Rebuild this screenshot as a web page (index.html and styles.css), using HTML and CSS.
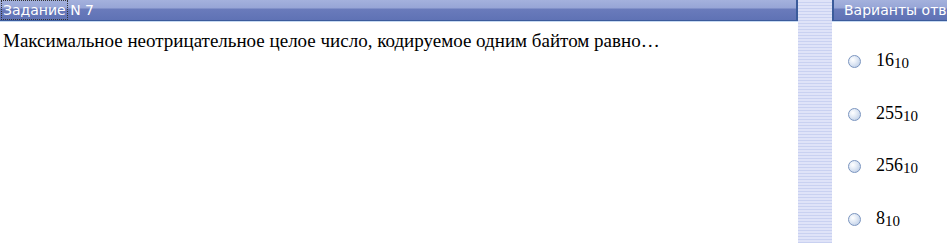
FILE: index.html
```html
<!DOCTYPE html>
<html lang="ru">
<head>
  <meta charset="UTF-8" />
  <title>Задание N 7</title>
  <link rel="stylesheet" href="styles.css">
</head>
<body>
  <div class="test">
    <div class="task">
      <div class="head"><span class="focus">Задание</span> N 7</div>
      <div class="question">Максимальное неотрицательное целое число, кодируемое одним байтом равно…</div>
    </div>

    <div class="strip"></div>

    <div class="answers">
      <div class="head head-right">Варианты ответов</div>
      <ul class="options">
        <li class="option"><span class="radio"></span><span class="value">16<sub>10</sub></span></li>
        <li class="option"><span class="radio"></span><span class="value">255<sub>10</sub></span></li>
        <li class="option"><span class="radio"></span><span class="value">256<sub>10</sub></span></li>
        <li class="option"><span class="radio"></span><span class="value">8<sub>10</sub></span></li>
      </ul>
    </div>
  </div>
</body>
</html>
```

FILE: styles.css
```css
html, body {
  margin: 0;
  padding: 0;
  width: 100%;
  height: 100%;
  overflow: hidden;
  background: white;
}

.test {
  display: flex;
  height: 243px;
}

.task {
  flex: 0 0 798px;
}

.strip {
  flex: 0 0 34px;
  background: repeating-linear-gradient(#dfe3f8 0, #dfe3f8 2px, #c9d1f1 2px, #c9d1f1 3px);
}

.answers {
  flex: 1;
  overflow: hidden;
  white-space: nowrap;
}

/* Шапка панелей */
.head {
  height: 21px;
  box-sizing: border-box;
  padding: 2px 0 0 3px;
  font-family: "DejaVu Sans", Verdana, sans-serif;
  font-size: 14px;
  line-height: 16px;
  color: white;
  background: linear-gradient(#a4b1dd 0, #97a5d6 8px, #6a7bbb 9px, #5f72b5 20px);
  border-bottom: 1px solid #3b5b9b;
  border-right: 2px solid #3b5b9b;
  box-shadow: 0 1px 0 #c7daf2;
}

.head-right {
  border-right: none;
  border-left: 2px solid #3b5b9b;
  padding-left: 10px;
}

.focus {
  outline: 1px dotted #333;
  outline-offset: 1px;
}

.question {
  padding: 9px 0 0 3px;
  font-family: "Liberation Serif", "Times New Roman", serif;
  font-size: 19px;
  color: black;
}

.options {
  list-style: none;
  margin: 0;
  padding: 29px 0 0 16px;
}

.option {
  display: flex;
  height: 52.7px;
  align-items: flex-start;
  font-family: "Liberation Serif", "Times New Roman", serif;
  font-size: 18px;
}

.radio {
  width: 11px;
  height: 11px;
  margin-top: 5px;
  border-radius: 50%;
  border: 1px solid #7b95bf;
  background: radial-gradient(circle at 35% 35%, #ffffff 0, #e6edf7 35%, #b3c6e2 100%);
}

.value {
  margin-left: 15px;
}

.value sub {
  font-size: 15px;
  vertical-align: -2px;
}
```
